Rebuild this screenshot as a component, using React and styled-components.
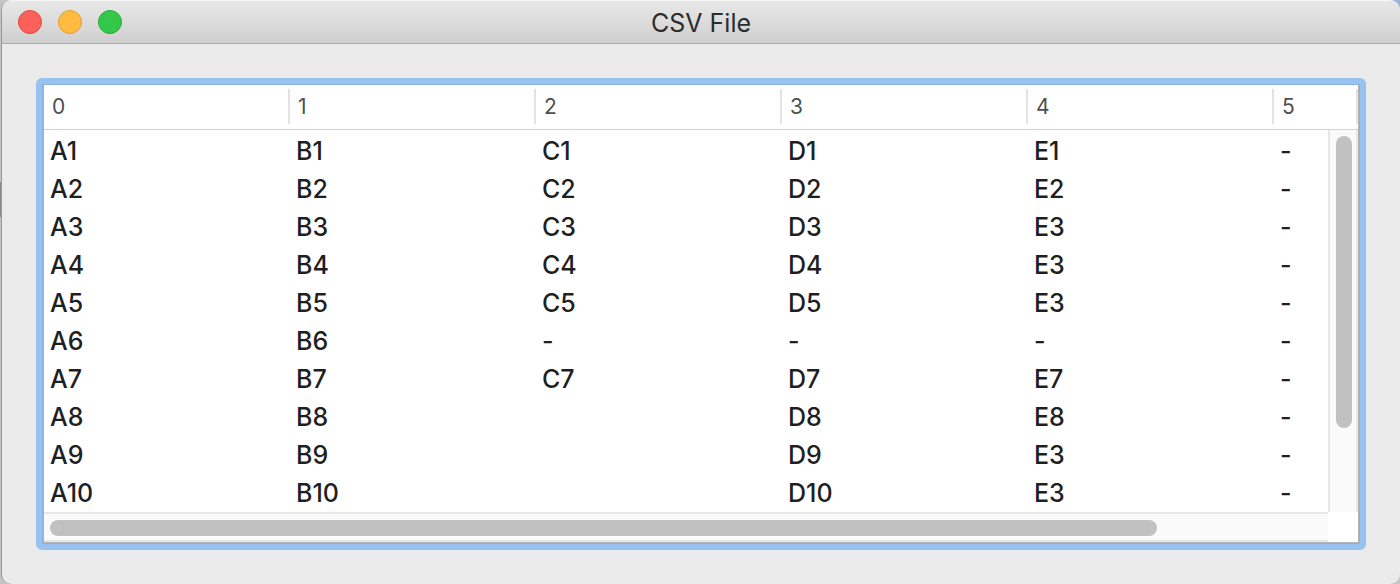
import React from "react";
import styled, { createGlobalStyle } from "styled-components";

const GlobalStyle = createGlobalStyle`
  * { box-sizing: border-box; }
  body {
    margin: 0;
    background: #c4c4c4;
    font-family: Inter, "Liberation Sans", sans-serif;
    color: #1f1f1f;
  }
`;

const Desktop = styled.div`
  display: flex;
  min-height: 100vh;
  padding-left: 1px;
  background:
    linear-gradient(#8a8a8a, #8a8a8a) 0 182px / 1px 35px no-repeat,
    linear-gradient(90deg, #c4c4c4 50%, transparent 50%),
    linear-gradient(#9db3d8 50%, #c4c4c4 50%);
`;

const Window = styled.main`
  flex: 1;
  display: flex;
  flex-direction: column;
  background: #ebebeb;
  border-left: 1px solid #989898;
  border-radius: 10px;
  overflow: hidden;
`;

const TitleBar = styled.header`
  display: grid;
  grid-template-columns: 1fr auto 1fr;
  align-items: center;
  height: 44px;
  padding: 0 16px;
  background: linear-gradient(#e8e8e8, #cfcfcf);
  border-top: 1px solid #f4f4f4;
  border-bottom: 1px solid #adadad;
`;

const Controls = styled.div`
  display: flex;
  gap: 16px;
`;

const Control = styled.button`
  width: 24px;
  height: 24px;
  padding: 0;
  border: 1px solid ${(p) => p.$edge};
  border-radius: 50%;
  background: ${(p) => p.$fill};
`;

const Title = styled.h1`
  margin: 0;
  padding-top: 2px;
  font-size: 25px;
  font-weight: 400;
  line-height: 32px;
  text-align: center;
  color: #2c2c2c;
`;

const Content = styled.div`
  flex: 1;
  display: flex;
  padding: 34px;
`;

const FocusRing = styled.div`
  flex: 1;
  display: flex;
  border: 6px solid #97c2f2;
  border-radius: 6px;
  background: #8ab0de;
  padding: 1px;
`;

const Sheet = styled.section`
  flex: 1;
  display: grid;
  grid-template-columns: 1fr 30px;
  grid-template-rows: 45px 1fr 30px;
  background: #fff;
  border: solid #b4b4b4;
  border-width: 0 1px 1px;
`;

const Table = styled.table`
  grid-area: 1 / 1 / 3 / 3;
  align-self: start;
  width: 100%;
  table-layout: fixed;
  border-collapse: separate;
  border-spacing: 0;
`;

const HeadCell = styled.th`
  width: ${(p) => (p.$last ? "auto" : "246px")};
  height: 45px;
  padding: 0 0 2px;
  border-bottom: 1px solid #d2d2d2;
  font-size: 21px;
  font-weight: 400;
  line-height: 35px;
  text-align: left;
  color: #4f4f4f;
`;

const HeadLabel = styled.div`
  padding-left: 8px;
  border-right: 2px solid #e3e3e3;
`;

const Body = styled.tbody`
  &::before {
    content: "";
    display: block;
    height: 2px;
  }
`;

const Cell = styled.td`
  height: 38px;
  padding: 0 0 0 6px;
  font-size: 25px;
  font-weight: 450;
  line-height: 38px;
`;

const Track = styled.div`
  display: flex;
  flex-direction: ${(p) => (p.$vertical ? "column" : "row")};
  grid-area: ${(p) => (p.$vertical ? "2 / 2" : "3 / 1")};
  padding: ${(p) => (p.$vertical ? "6px 4px 6px 6px" : "6px 6px 4px")};
  background: #fafafa;
  border: solid #e7e7e7;
  border-width: ${(p) => (p.$vertical ? "0 2px" : "2px 0")};
`;

const Thumb = styled.div`
  flex: 0 0 ${(p) => p.$size};
  border-radius: 8px;
  background: #c1c1c1;
`;

const controls = [
  { label: "Close", fill: "#fc605b", edge: "#e2463f" },
  { label: "Minimize", fill: "#fdbc40", edge: "#dea034" },
  { label: "Zoom", fill: "#34c84a", edge: "#27aa35" },
];

const columns = ["0", "1", "2", "3", "4", "5"];

const rows = [
  ["A1", "B1", "C1", "D1", "E1", "-"],
  ["A2", "B2", "C2", "D2", "E2", "-"],
  ["A3", "B3", "C3", "D3", "E3", "-"],
  ["A4", "B4", "C4", "D4", "E3", "-"],
  ["A5", "B5", "C5", "D5", "E3", "-"],
  ["A6", "B6", "-", "-", "-", "-"],
  ["A7", "B7", "C7", "D7", "E7", "-"],
  ["A8", "B8", "", "D8", "E8", "-"],
  ["A9", "B9", "", "D9", "E3", "-"],
  ["A10", "B10", "", "D10", "E3", "-"],
];

export default function App() {
  return (
    <>
      <GlobalStyle />
      <Desktop>
        <Window>
          <TitleBar>
            <Controls>
              {controls.map((c) => (
                <Control key={c.label} type="button" aria-label={c.label} $fill={c.fill} $edge={c.edge} />
              ))}
            </Controls>
            <Title>CSV File</Title>
          </TitleBar>
          <Content>
            <FocusRing>
              <Sheet>
                <Table>
                  <thead>
                    <tr>
                      {columns.map((name, i) => (
                        <HeadCell key={name} scope="col" $last={i === columns.length - 1}>
                          <HeadLabel>{name}</HeadLabel>
                        </HeadCell>
                      ))}
                    </tr>
                  </thead>
                  <Body>
                    {rows.map((row) => (
                      <tr key={row[0]}>
                        {row.map((value, i) => (
                          <Cell key={columns[i]}>{value}</Cell>
                        ))}
                      </tr>
                    ))}
                  </Body>
                </Table>
                <Track $vertical>
                  <Thumb $size="79%" />
                </Track>
                <Track>
                  <Thumb $size="87%" />
                </Track>
              </Sheet>
            </FocusRing>
          </Content>
        </Window>
      </Desktop>
    </>
  );
}
